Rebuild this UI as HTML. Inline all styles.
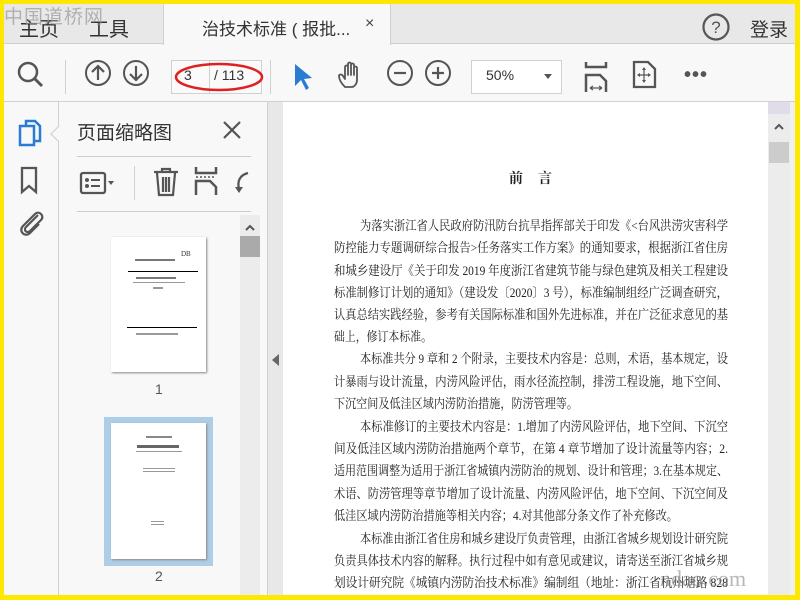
<!DOCTYPE html>
<html><head><meta charset="utf-8"><style>
*{margin:0;padding:0;box-sizing:border-box}
body{width:800px;height:600px;overflow:hidden;background:#ffe800;font-family:"Liberation Sans","Noto Sans CJK SC",sans-serif;position:relative}
.a{position:absolute}
.ser{font-family:"Liberation Serif","Noto Serif CJK SC",serif}
svg{position:absolute;overflow:visible}
.doc text{font-family:"Liberation Serif","Noto Serif CJK SC",serif;font-size:13px;fill:#222}
</style></head><body>
<div class="a" style="left:4px;top:4px;width:791px;height:591px;background:#f8f8f8;overflow:hidden">
 <div class="a" style="left:0;top:0;width:791px;height:40px;background:#e8e8e8;border-bottom:1px solid #cfcfcf"></div>
 <div class="a" style="left:159px;top:0;width:228px;height:41px;background:#f8f8f8;border-left:1px solid #d0d0d0;border-right:1px solid #d0d0d0"></div>
 <div class="a" style="left:15px;top:9px;font-size:20px;color:#333">主页</div>
 <div class="a" style="left:85px;top:9px;font-size:20px;color:#333">工具</div>
 <div class="a" style="left:0px;top:-2px;font-size:19px;color:#999;opacity:.7;letter-spacing:1px">中国道桥网</div>
 <div class="a" style="left:198px;top:11px;font-size:17px;color:#333">治技术标准 ( 报批...</div>
 <div class="a" style="left:361px;top:11px;font-size:16px;color:#444">×</div>
 <svg style="left:697px;top:8px" width="30" height="30"><circle cx="15" cy="15" r="12.5" fill="none" stroke="#555" stroke-width="2.2"/><text x="15" y="21" font-size="17" text-anchor="middle" fill="#555" font-family="Liberation Sans">?</text></svg>
 <div class="a" style="left:746px;top:11px;font-size:19px;color:#333">登录</div>
 <div class="a" style="left:0;top:97px;width:791px;height:1px;background:#d0d0d0"></div>
 <svg style="left:12px;top:56px" width="30" height="30"><circle cx="12" cy="12" r="9" fill="none" stroke="#555" stroke-width="2.5"/><line x1="19" y1="19" x2="26" y2="26" stroke="#555" stroke-width="3"/></svg>
 <div class="a" style="left:61px;top:56px;width:1px;height:34px;background:#d0d0d0"></div>
 <svg style="left:81px;top:56px" width="28" height="28"><circle cx="13" cy="13" r="12" fill="none" stroke="#555" stroke-width="2"/><path d="M13 20V6M7 12l6-6 6 6" fill="none" stroke="#555" stroke-width="2.2"/></svg>
 <svg style="left:119px;top:56px" width="28" height="28"><circle cx="13" cy="13" r="12" fill="none" stroke="#555" stroke-width="2"/><path d="M13 6v14M7 14l6 6 6-6" fill="none" stroke="#555" stroke-width="2.2"/></svg>
 <div class="a" style="left:167px;top:56px;width:91px;height:34px;border:1px solid #d0d0d0;background:#fafafa"></div>
 <div class="a" style="left:205px;top:56px;width:1px;height:34px;background:#d0d0d0"></div>
 <div class="a" style="left:180px;top:63px;font-size:14px;color:#333">3</div>
 <div class="a" style="left:210px;top:63px;font-size:14px;color:#333">/ 113</div>
 <svg style="left:170px;top:58px" width="92" height="32"><ellipse cx="45" cy="15" rx="43" ry="13" fill="none" stroke="#e02020" stroke-width="2.5"/></svg>
 <div class="a" style="left:266px;top:56px;width:1px;height:34px;background:#d0d0d0"></div>
 <svg style="left:288px;top:58px" width="24" height="30"><path d="M3 2L3 24L9 18L14 28L17 26L12 17L20 16Z" fill="#2a7bd4"/></svg>
 <svg style="left:332px;top:56px" width="32" height="32"><path d="M9 27C5 23 3 19 3 16c0-2 3-2 4 0l2 3V7c0-2 3-2 3 0v8V4c0-2 3-2 3 0v11V5c0-2 3-2 3 0v10V8c0-2 3-2 3 0v12c0 4-3 7-5 7Z" fill="none" stroke="#555" stroke-width="1.8" stroke-linejoin="round"/></svg>
 <svg style="left:383px;top:56px" width="28" height="28"><circle cx="13" cy="13" r="12" fill="none" stroke="#555" stroke-width="2"/><line x1="7" y1="13" x2="19" y2="13" stroke="#555" stroke-width="2.2"/></svg>
 <svg style="left:421px;top:56px" width="28" height="28"><circle cx="13" cy="13" r="12" fill="none" stroke="#555" stroke-width="2"/><path d="M7 13h12M13 7v12" stroke="#555" stroke-width="2.2"/></svg>
 <div class="a" style="left:467px;top:56px;width:91px;height:34px;border:1px solid #d0d0d0;background:#fff"></div>
 <div class="a" style="left:482px;top:63px;font-size:14px;color:#333">50%</div>
 <svg style="left:540px;top:70px" width="10" height="6"><path d="M0 0h8L4 5Z" fill="#555"/></svg>
 <svg style="left:580px;top:58px" width="26" height="32"><path d="M2 0v5h20V0M2 30V13h14l6 6v11" fill="none" stroke="#555" stroke-width="2.5"/><path d="M6 26h12M6 26l3-2M6 26l3 2M18 26l-3-2M18 26l-3 2" stroke="#555" stroke-width="1.2"/></svg>
 <svg style="left:628px;top:56px" width="26" height="30"><path d="M2 2h14l7 7v18H2Z" fill="none" stroke="#555" stroke-width="2.3"/><path d="M12 8v14M6 15h12" stroke="#555" stroke-width="1.2"/><path d="M12 7l-2 3h4ZM12 23l-2-3h4ZM5 15l3-2v4ZM19 15l-3-2v4Z" fill="#555"/></svg>
 <div class="a" style="left:680px;top:60px;font-size:20px;color:#555;letter-spacing:1px;font-weight:bold">•••</div>
 <div class="a" style="left:54px;top:98px;width:1px;height:493px;background:#d0d0d0"></div>
 <svg style="left:14px;top:115px" width="26" height="30"><rect x="2" y="7" width="14" height="19" fill="none" stroke="#2a7bd4" stroke-width="2.5"/><path d="M8 7V2h9l5 5v15h-6" fill="none" stroke="#2a7bd4" stroke-width="2.5"/></svg>
 <svg style="left:16px;top:162px" width="22" height="30"><path d="M2 2h14v24l-7-6-7 6Z" fill="none" stroke="#555" stroke-width="2.3"/></svg>
 <svg style="left:14px;top:205px" width="28" height="30"><path d="M20 6L8 18c-3 3 1 7 4 4L23 11c4-4-2-10-6-6L5 17c-5 5 2 12 7 7l9-9" fill="none" stroke="#555" stroke-width="2.2"/></svg>
 <svg style="left:47px;top:122px" width="10" height="16"><path d="M8 0L0 8l8 8" fill="#f8f8f8" stroke="#ccc"/></svg>
 <div class="a" style="left:73px;top:114px;font-size:19px;color:#333">页面缩略图</div>
 <svg style="left:218px;top:116px" width="20" height="20"><path d="M2 2l16 16M18 2L2 18" stroke="#555" stroke-width="2.2"/></svg>
 <div class="a" style="left:73px;top:152px;width:174px;height:1px;background:#ccc"></div>
 <div class="a" style="left:73px;top:207px;width:174px;height:1px;background:#ccc"></div>
 <svg style="left:76px;top:167px" width="40" height="26"><rect x="1" y="2" width="24" height="20" rx="2" fill="none" stroke="#555" stroke-width="2.3"/><circle cx="7" cy="9" r="2" fill="#555"/><circle cx="7" cy="15" r="2" fill="#555"/><path d="M11 9h9M11 15h9" stroke="#555" stroke-width="2"/><path d="M28 10h6l-3 4Z" fill="#555"/></svg>
 <div class="a" style="left:130px;top:162px;width:1px;height:34px;background:#d0d0d0"></div>
 <svg style="left:148px;top:163px" width="28" height="30"><path d="M2 5h24M10 5V2h8v3M5 6l2 22h14l2-22M11 10v15M14 10v15M17 10v15" fill="none" stroke="#555" stroke-width="2.2"/></svg>
 <svg style="left:190px;top:163px" width="28" height="30"><path d="M2 0v6h20V0M2 28V14h14l6 6v8" fill="none" stroke="#555" stroke-width="2.5"/><path d="M2 10h20" stroke="#555" stroke-width="1.5" stroke-dasharray="2 2"/></svg>
 <svg style="left:230px;top:165px" width="20" height="28"><path d="M14 4C6 6 3 12 5 20" fill="none" stroke="#555" stroke-width="2.3"/><path d="M1 18l4 6 4-6Z" fill="#555"/></svg>
 <div class="a" style="left:236px;top:211px;width:20px;height:380px;background:#ececec"></div>
 <svg style="left:241px;top:219px" width="10" height="8"><path d="M1 7l4-4 4 4" fill="none" stroke="#555" stroke-width="2"/></svg>
 <div class="a" style="left:236px;top:232px;width:20px;height:21px;background:#aaa"></div>
 <div class="a" style="left:263px;top:98px;width:1px;height:493px;background:#cfcfcf"></div>
 <div class="a" style="left:264px;top:98px;width:15px;height:493px;background:#e8e8e8"></div>
 <svg style="left:268px;top:350px" width="8" height="12"><path d="M7 0v12L0 6Z" fill="#666"/></svg>
 <div class="a" style="left:107px;top:233px;width:95px;height:135px;background:#fff;box-shadow:1px 1px 2px #888">
  <div class="a ser" style="left:70px;top:13px;font-size:7px;color:#333">DB</div>
  <div class="a" style="left:24px;top:22px;width:40px;height:2px;background:#777"></div>
  <div class="a" style="left:17px;top:34px;width:70px;height:1px;background:#000"></div>
  <div class="a" style="left:25px;top:40px;width:40px;height:2px;background:#777"></div>
  <div class="a" style="left:22px;top:45px;width:52px;height:1px;background:#999"></div>
  <div class="a" style="left:42px;top:50px;width:10px;height:2px;background:#999"></div>
  <div class="a" style="left:16px;top:90px;width:70px;height:1px;background:#000"></div>
  <div class="a" style="left:25px;top:96px;width:42px;height:2px;background:#999"></div>
 </div>
 <div class="a" style="left:151px;top:377px;font-size:14px;color:#555">1</div>
 <div class="a" style="left:100px;top:413px;width:109px;height:149px;background:#aecde6"></div>
 <div class="a" style="left:107px;top:419px;width:95px;height:136px;background:#fff;box-shadow:1px 1px 2px #888">
  <div class="a" style="left:35px;top:13px;width:26px;height:2px;background:#888"></div>
  <div class="a" style="left:26px;top:22px;width:42px;height:3px;background:#666"></div>
  <div class="a" style="left:25px;top:28px;width:46px;height:1px;background:#999"></div>
  <div class="a" style="left:32px;top:45px;width:32px;height:6px;background:repeating-linear-gradient(#999 0 1px,transparent 1px 3px)"></div>
  <div class="a" style="left:40px;top:98px;width:13px;height:6px;background:repeating-linear-gradient(#999 0 1px,transparent 1px 3px)"></div>
 </div>
 <div class="a" style="left:151px;top:564px;font-size:14px;color:#555">2</div>
 <div class="a" style="left:279px;top:98px;width:485px;height:493px;background:#fff"></div>
 <div class="a" style="left:764px;top:98px;width:22px;height:493px;background:#ececec"></div>
 <div class="a" style="left:764px;top:98px;width:22px;height:12px;background:#e0dce8"></div>
 <svg style="left:770px;top:118px" width="10" height="8"><path d="M1 7l4-4 4 4" fill="none" stroke="#555" stroke-width="2"/></svg>
 <div class="a" style="left:765px;top:138px;width:20px;height:21px;background:#ccc"></div>
 <div class="a" style="left:786px;top:98px;width:5px;height:493px;background:#f0f0f0"></div>
</div>
<div class="a ser" style="left:509px;top:168px;font-size:14px;font-weight:bold;color:#222;letter-spacing:15px">前言</div>
<svg class="doc" style="left:0;top:0" width="800" height="600">
<text x="360" y="230" textLength="368" lengthAdjust="spacingAndGlyphs">为落实浙江省人民政府防汛防台抗旱指挥部关于印发《&lt;台风洪涝灾害科学</text>
<text x="334" y="252" textLength="394" lengthAdjust="spacingAndGlyphs">防控能力专题调研综合报告&gt;任务落实工作方案》的通知要求，根据浙江省住房</text>
<text x="334" y="275" textLength="394" lengthAdjust="spacingAndGlyphs">和城乡建设厅《关于印发 2019 年度浙江省建筑节能与绿色建筑及相关工程建设</text>
<text x="334" y="297" textLength="394" lengthAdjust="spacingAndGlyphs">标准制修订计划的通知》（建设发〔2020〕3 号），标准编制组经广泛调查研究，</text>
<text x="334" y="319" textLength="394" lengthAdjust="spacingAndGlyphs">认真总结实践经验，参考有关国际标准和国外先进标准，并在广泛征求意见的基</text>
<text x="334" y="341" textLength="98" lengthAdjust="spacingAndGlyphs">础上，修订本标准。</text>
<text x="360" y="363" textLength="368" lengthAdjust="spacingAndGlyphs">本标准共分 9 章和 2 个附录，主要技术内容是：总则，术语，基本规定，设</text>
<text x="334" y="386" textLength="394" lengthAdjust="spacingAndGlyphs">计暴雨与设计流量，内涝风险评估，雨水径流控制，排涝工程设施，地下空间、</text>
<text x="334" y="408" textLength="244" lengthAdjust="spacingAndGlyphs">下沉空间及低洼区域内涝防治措施，防涝管理等。</text>
<text x="360" y="431" textLength="368" lengthAdjust="spacingAndGlyphs">本标准修订的主要技术内容是：1.增加了内涝风险评估，地下空间、下沉空</text>
<text x="334" y="453" textLength="394" lengthAdjust="spacingAndGlyphs">间及低洼区域内涝防治措施两个章节，在第 4 章节增加了设计流量等内容；2.</text>
<text x="334" y="475" textLength="394" lengthAdjust="spacingAndGlyphs">适用范围调整为适用于浙江省城镇内涝防治的规划、设计和管理；3.在基本规定、</text>
<text x="334" y="498" textLength="394" lengthAdjust="spacingAndGlyphs">术语、防涝管理等章节增加了设计流量、内涝风险评估，地下空间、下沉空间及</text>
<text x="334" y="520" textLength="344" lengthAdjust="spacingAndGlyphs">低洼区域内涝防治措施等相关内容；4.对其他部分条文作了补充修改。</text>
<text x="360" y="543" textLength="368" lengthAdjust="spacingAndGlyphs">本标准由浙江省住房和城乡建设厅负责管理，由浙江省城乡规划设计研究院</text>
<text x="334" y="565" textLength="394" lengthAdjust="spacingAndGlyphs">负责具体技术内容的解释。执行过程中如有意见或建议，请寄送至浙江省城乡规</text>
<text x="334" y="587" textLength="394" lengthAdjust="spacingAndGlyphs">划设计研究院《城镇内涝防治技术标准》编制组（地址：浙江省杭州塘路 828</text>
</svg>
<div class="a" style="left:660px;top:566px;font-size:22px;color:#888;opacity:.6;font-family:'Liberation Serif',serif">ndao.com</div>
</body></html>
